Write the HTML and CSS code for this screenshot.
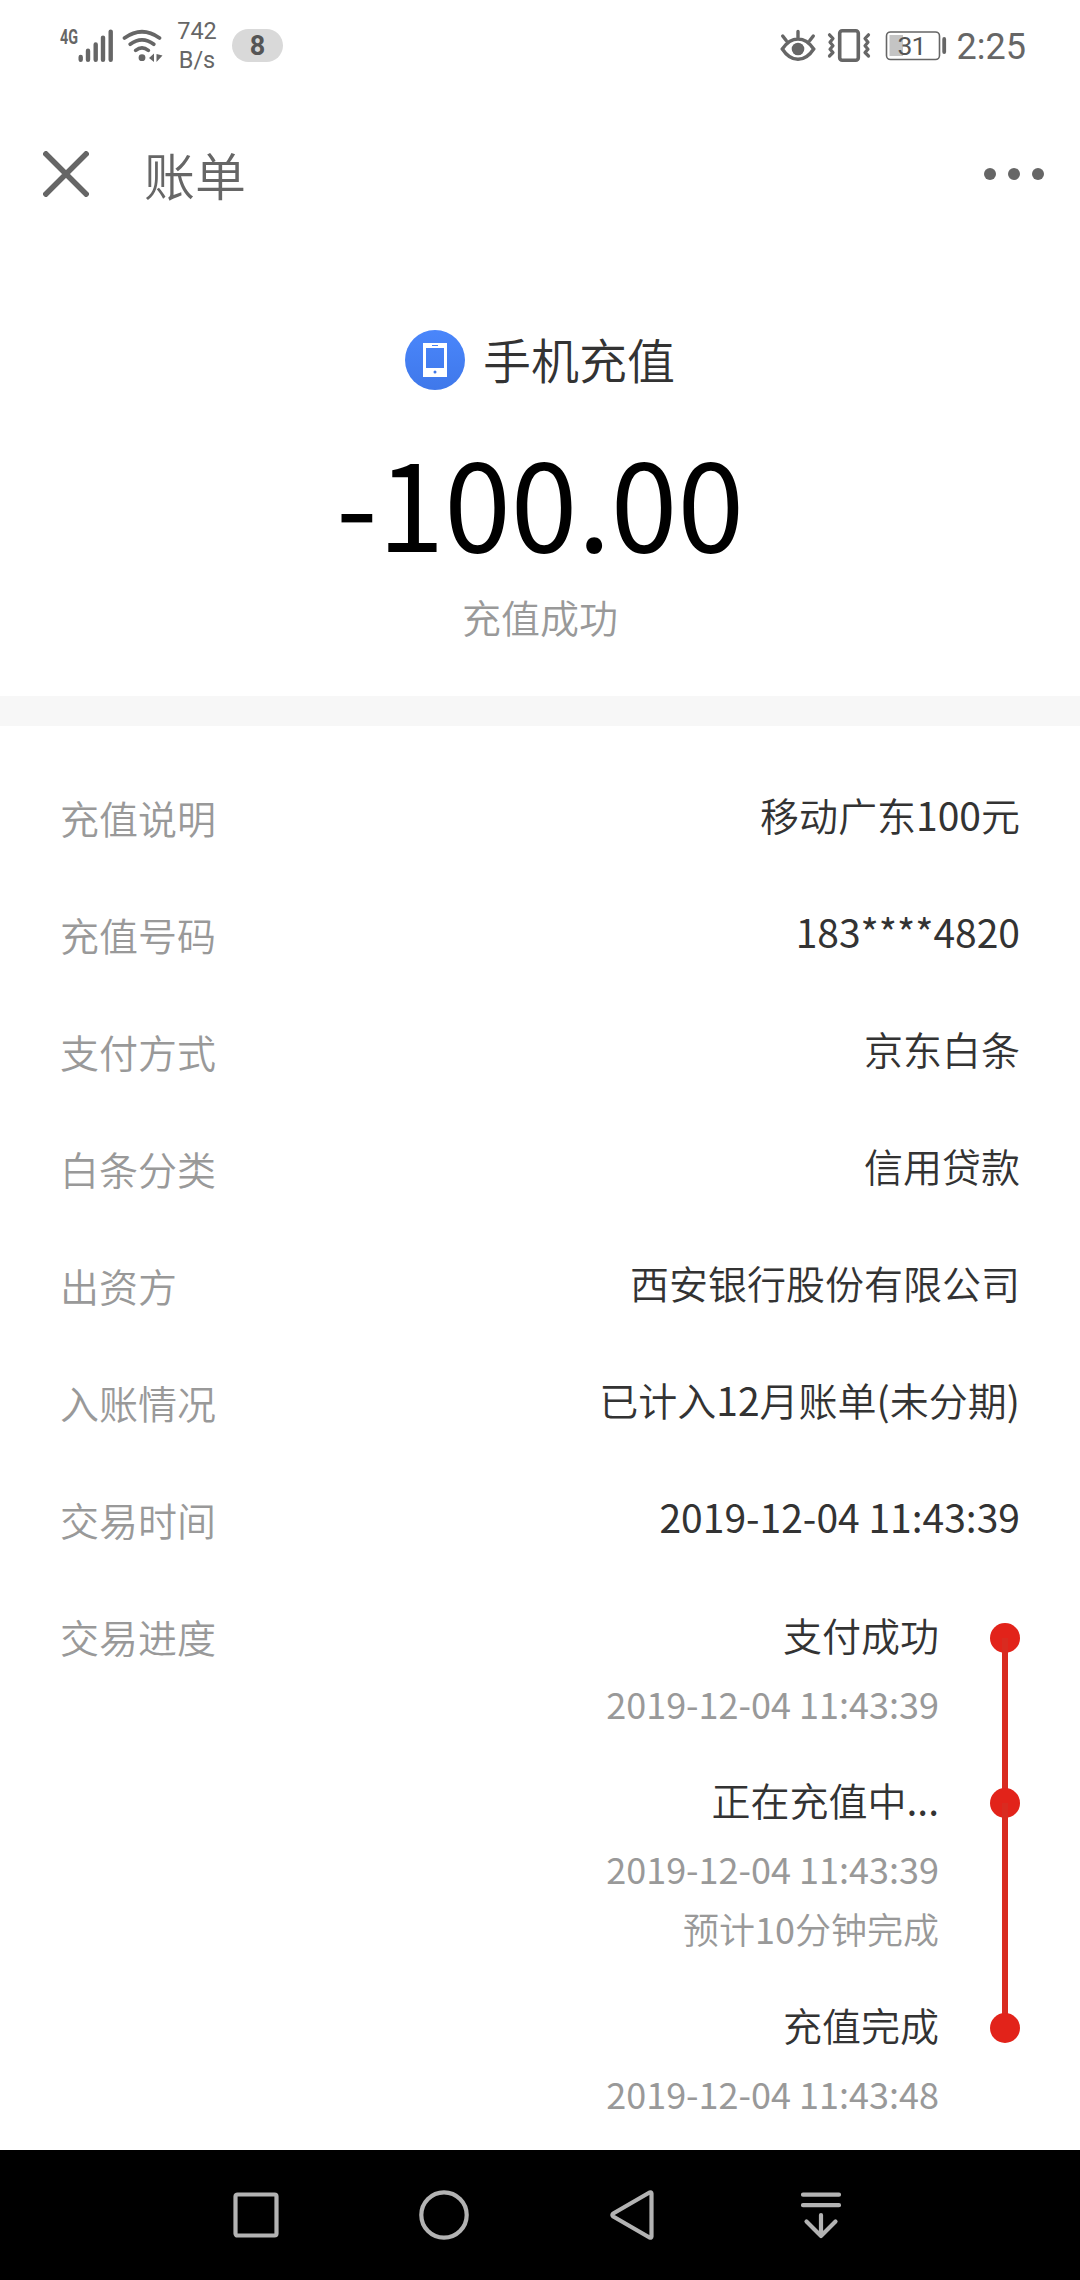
FILE: index.html
```html
<!DOCTYPE html>
<html lang="zh-CN">
<head>
<meta charset="utf-8">
<title>账单</title>
<link rel="stylesheet" href="styles.css">
</head>
<body>
<div class="screen">
  <header class="status">
    <div class="status-left">
      <svg class="signal" width="58" height="40" viewBox="58 25 58 40">
        <text x="60" y="42.5" textLength="18" lengthAdjust="spacingAndGlyphs">4G</text>
        <path d="M80.7 56v2.8M88 49.8v9M95.7 43.4v15.4M103 36.6v22.2M110.7 30.6v28.2"/>
      </svg>
      <svg class="wifi" width="44" height="40" viewBox="121 25 44 40">
        <path class="arc" d="M124.500 37Q142 24.500 159.500 37M130.200 43.200Q142 34.500 153.800 43.200M135.700 49.400Q142 44.500 148.300 49.400"/>
        <circle cx="142" cy="56.700" r="3.400"/>
        <path d="M149 57l5-4.500v8.500zM156.500 53l6 1.500-6 6.500z"/>
      </svg>
      <div class="speed"><span>742</span><span>B/s</span></div>
      <div class="pill">8</div>
    </div>
    <div class="status-right">
      <svg class="eye" width="38" height="36" viewBox="779 28 38 36">
        <path d="M782.300 49Q789 39 798 39T813.700 49Q807 59.300 798 59.300T782.300 49zM798 31.500v6M782.700 36l3.500 4.500M813.300 36l-3.500 4.500"/>
        <circle cx="798" cy="49" r="6.300"/>
      </svg>
      <svg class="vibrate" width="44" height="36" viewBox="827 28 44 36">
        <rect x="839.700" y="30.800" width="18.600" height="29.500" rx="2.500"/>
        <path d="M829.500 34.800l3.500 3.700-3 3.700 3 3.500-3 3.500 3 3.300-3.500 3.500M868.500 34.800l-3.500 3.700 3 3.700-3 3.500 3 3.500-3 3.300 3.500 3.500"/>
      </svg>
      <svg class="battery" width="62" height="36" viewBox="885 28 62 36">
        <rect class="level" x="889.500" y="35" width="13.500" height="21"/>
        <rect class="case" x="886.500" y="32" width="53" height="27.500" rx="4"/>
        <rect class="nub" x="942.300" y="37" width="3.800" height="17" rx="1.900"/>
        <text x="897.500" y="55">31</text>
      </svg>
      <time class="clock">2:25</time>
    </div>
  </header>

  <nav class="topbar">
    <svg class="close" width="46" height="46" viewBox="0 0 46 46"><path d="M1 1l44 44M45 1L1 45"/></svg>
    <h1>账单</h1>
    <svg class="more" width="60" height="12" viewBox="0 0 60 12"><circle cx="6" cy="6" r="6"/><circle cx="30" cy="6" r="6"/><circle cx="54" cy="6" r="6"/></svg>
  </nav>

  <section class="summary">
    <div class="merchant">
      <svg width="60" height="60" viewBox="0 0 60 60">
        <defs><linearGradient id="blue" x1="0" y1="0" x2="0" y2="1"><stop offset="0" stop-color="#4a86fb"/><stop offset="1" stop-color="#3f78ea"/></linearGradient></defs>
        <circle cx="30" cy="30" r="30" fill="url(#blue)"/>
        <path fill="#fff" fill-rule="evenodd" d="M18 13h24v34H18zM21 18v20h18V18zM27 15v1h6v-1z"/>
        <circle cx="30" cy="42" r="1.500" fill="#3f78ea"/>
      </svg>
      <span>手机充值</span>
    </div>
    <div class="amount">-100.00</div>
    <div class="result">充值成功</div>
  </section>

  <main class="details">
    <dl class="rows">
      <div class="row"><dt>充值说明</dt><dd>移动广东<span class="num">100</span>元</dd></div>
      <div class="row"><dt>充值号码</dt><dd class="num">183****4820</dd></div>
      <div class="row"><dt>支付方式</dt><dd>京东白条</dd></div>
      <div class="row"><dt>白条分类</dt><dd>信用贷款</dd></div>
      <div class="row"><dt>出资方</dt><dd>西安银行股份有限公司</dd></div>
      <div class="row"><dt>入账情况</dt><dd>已计入<span class="num">12</span>月账单<span class="num">(</span>未分期<span class="num">)</span></dd></div>
      <div class="row"><dt>交易时间</dt><dd class="num">2019-12-04 11:43:39</dd></div>
      <div class="row progress">
        <dt>交易进度</dt>
        <dd>
          <ol class="timeline">
            <li><div class="step"><b>支付成功</b><p class="num">2019-12-04 11:43:39</p></div><i class="dot"></i></li>
            <li><div class="step"><b>正在充值中<span class="num">...</span></b><p class="num">2019-12-04 11:43:39</p><p>预计<span class="num">10</span>分钟完成</p></div><i class="dot"></i></li>
            <li><div class="step"><b>充值完成</b><p class="num">2019-12-04 11:43:48</p></div><i class="dot"></i></li>
          </ol>
        </dd>
      </div>
    </dl>
  </main>

  <footer class="navbar">
    <svg width="54" height="54" viewBox="0 0 54 54"><rect x="6.500" y="6.500" width="41" height="41" rx="2"/></svg>
    <svg width="54" height="54" viewBox="0 0 54 54"><circle cx="27" cy="27" r="22.700"/></svg>
    <svg width="54" height="54" viewBox="0 0 54 54"><path d="M7.200 25.500L43.500 4.500Q45.500 4 45.500 5.500v43Q45.500 50 43.500 49.500L7.200 28.500Q5.700 27 7.200 25.500z"/></svg>
    <svg width="54" height="54" viewBox="0 0 54 54"><path d="M9 6.700h36M9 17.200h36M27 27v21M12.500 33.500L27 48l14.500-14.500"/></svg>
  </footer>
</div>
</body>
</html>
```

FILE: styles.css
```css
* { box-sizing: border-box; }

body, h1, dl, dd, ol, p { margin: 0; padding: 0; }

body {
  background: #fff;
  color: #333;
  font-family: "Noto Sans CJK SC DemiLight", "Noto Sans CJK SC", sans-serif;
  font-weight: 350;
}

.num, .amount { font-family: "Noto Sans CJK SC", sans-serif; font-weight: 400; }

svg { display: block; flex: none; }

.screen {
  width: 1080px;
  height: 2280px;
  display: flex;
  flex-direction: column;
  overflow: hidden;
}

/* status bar */
.status {
  height: 91px;
  padding: 0 54px 0 58px;
  display: flex;
  justify-content: space-between;
  align-items: center;
  color: #666;
  font-family: Roboto, sans-serif;
  font-weight: 400;
}
.status-left, .status-right { display: flex; align-items: center; height: 91px; }
.signal { margin-right: 5px; }
.signal text { font-size: 20px; font-weight: 700; fill: #666; }
.signal path { stroke: #666; stroke-width: 4.4; stroke-linecap: round; }
.wifi { margin-right: 12px; fill: #666; }
.wifi .arc { fill: none; stroke: #666; stroke-width: 3.7; stroke-linecap: round; }
.speed {
  width: 40px;
  margin-right: 15px;
  display: flex;
  flex-direction: column;
  align-items: center;
  font-size: 23.5px;
  line-height: 29px;
}
.pill {
  width: 51px;
  height: 33px;
  border-radius: 17px;
  background: #d9d9d9;
  color: #555;
  font-size: 27px;
  font-weight: 700;
  line-height: 34px;
  text-align: center;
}
.eye { margin-right: 10px; fill: #666; }
.eye path { fill: none; stroke: #666; stroke-width: 3.4; stroke-linecap: round; }
.vibrate { margin-right: 14px; fill: none; stroke: #666; stroke-width: 3.6; }
.vibrate path { stroke-width: 3.2; stroke-linecap: round; stroke-linejoin: round; }
.battery { margin-right: 10px; }
.battery .level { fill: #c4c4c4; }
.battery .case { fill: none; stroke: #666; stroke-width: 1.6; }
.battery .nub { fill: #666; }
.battery text { fill: #555; font-size: 26.5px; font-weight: 400; letter-spacing: -1px; }
.clock { padding-top: 2px; font-size: 36px; line-height: 42px; white-space: nowrap; }

/* page header */
.topbar {
  height: 167px;
  padding: 0 36px 2px 43px;
  display: flex;
  align-items: center;
  color: #666;
}
.close { stroke: #666; stroke-width: 5.5; }
.topbar h1 {
  margin: 1px auto 0 55px;
  font-size: 51px;
  font-weight: 350;
  line-height: 75px;
}
.more { fill: #666; }

/* amount summary */
.summary {
  height: 438px;
  padding-top: 72px;
  display: flex;
  flex-direction: column;
  align-items: center;
}
.merchant { display: flex; gap: 18px; height: 60px; }
.merchant span { font-size: 48px; line-height: 56px; }
.amount {
  margin-top: 35px;
  font-size: 120px;
  line-height: 150px;
  color: #000;
}
.result {
  margin-top: 11px;
  font-size: 39px;
  line-height: 60px;
  color: #999;
}

/* detail rows */
.details {
  height: 1454px;
  padding: 30px 60px 0;
  border-top: 30px solid #f7f7f7;
}
.row {
  height: 117px;
  display: flex;
  justify-content: space-between;
  font-size: 39px;
  line-height: 117px;
}
.row dt { padding-top: 3px; color: #999; }

/* transaction progress */
.timeline { list-style: none; padding-top: 20px; }
.timeline li {
  display: flex;
  justify-content: flex-end;
  gap: 51px;
  padding-bottom: 27px;
  position: relative;
}
.step { display: flex; flex-direction: column; text-align: right; }
.step b { font-weight: 350; line-height: 78px; }
.step p { font-size: 36px; line-height: 60px; color: #999; }
.dot {
  width: 30px;
  height: 30px;
  margin-top: 28px;
  border-radius: 50%;
  background: #e2231a;
}
.timeline li:not(:last-child)::after {
  content: "";
  position: absolute;
  right: 12px;
  top: 43px;
  width: 6px;
  height: 100%;
  background: #d92b20;
}

/* system navigation */
.navbar {
  height: 130px;
  background: #000;
  display: flex;
  align-items: center;
  padding-left: 229px;
  gap: 134.300px;
}
.navbar svg {
  fill: none;
  stroke: #b3b3b3;
  stroke-width: 4.2;
  stroke-linecap: round;
  stroke-linejoin: round;
}
```
